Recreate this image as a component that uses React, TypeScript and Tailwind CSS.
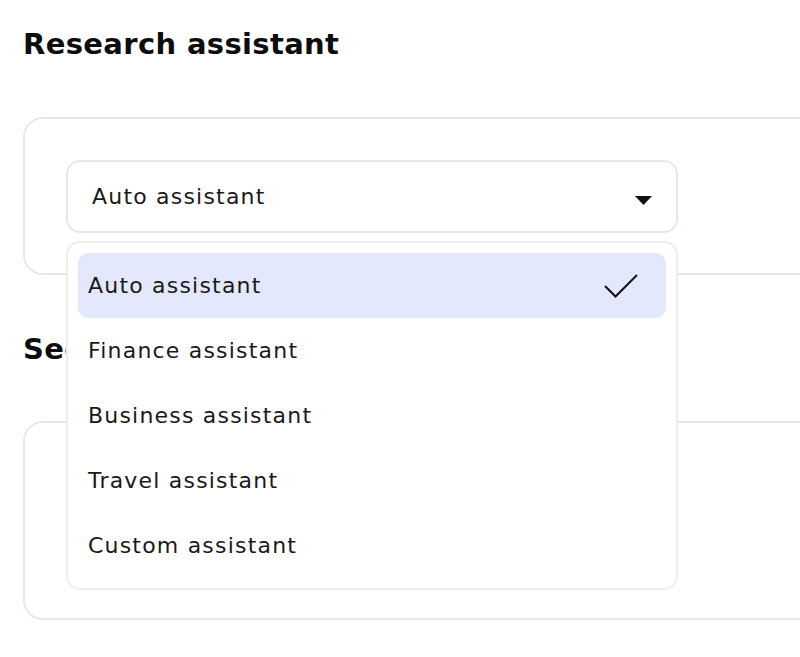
import React from "react";

const items = [
  "Auto assistant",
  "Finance assistant",
  "Business assistant",
  "Travel assistant",
  "Custom assistant",
];

export default function App() {
  return (
    <div
      className="relative w-[800px] h-[657px] overflow-hidden bg-white text-[#111111]"
      style={{ fontFamily: '"DejaVu Sans", "Noto Sans", sans-serif' }}
    >
      <div className="pl-[23px] pt-[24px]">
        <h1 className="text-[29px] leading-[40px] font-bold tracking-[0.35px] text-[#0d0d0d]">
          Research assistant
        </h1>
        <div className="mt-[53px] w-[900px] h-[158px] rounded-[20px] border-2 border-[#e5e8ee] px-[41px] pt-[41px]">
          <div className="relative w-[612px]">
            <div className="flex h-[73px] items-center justify-between rounded-[14px] border-2 border-[#e5e8ee] bg-white pl-[24px] pr-[24px]">
              <span className="text-[22px] tracking-[1.2px] text-[#1a1a1a]">Auto assistant</span>
              <svg width="17" height="9" viewBox="0 0 17 9" className="mt-[8px]">
                <path d="M0 0 L17 0 L8.5 9 Z" fill="#111" />
              </svg>
            </div>
            <div className="absolute left-0 top-[81px] z-10 w-[612px] rounded-[14px] border-2 border-[#eeeef1] bg-white p-[10px]">
              {items.map((it, i) => (
                <div
                  key={it}
                  className={
                    "flex h-[65px] items-center justify-between rounded-[10px] pl-[10px] pr-[28px] " +
                    (i === 0 ? "bg-[#e3e8fd]" : "")
                  }
                >
                  <span className="text-[22px] tracking-[1.2px] text-[#1a1a1a]">{it}</span>
                  {i === 0 && (
                    <svg width="34" height="26" viewBox="0 0 34 26">
                      <path d="M1 13 L11.5 23.5 L33 2" fill="none" stroke="#111" strokeWidth="2" />
                    </svg>
                  )}
                </div>
              ))}
            </div>
          </div>
        </div>
        <h2 className="mt-[54px] text-[29px] leading-[40px] font-bold tracking-[0.35px] text-[#0d0d0d]">
          Secondary assistant
        </h2>
        <div className="mt-[52px] w-[900px] h-[199px] rounded-[20px] border-2 border-[#e5e8ee]" />
      </div>
    </div>
  );
}
